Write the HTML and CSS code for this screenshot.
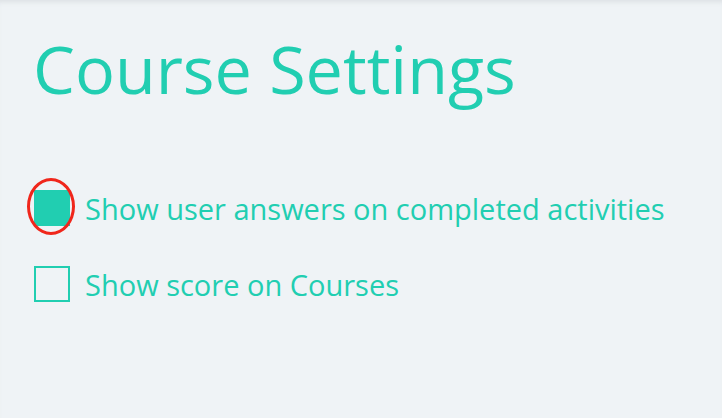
FILE: index.html
```html
<!DOCTYPE html>
<html>
<head>
    <title>Course Settings</title>
    <link rel="stylesheet" href="styles.css">
</head>
<body>
    <div class="page">
        <h1 class="page-title">Course Settings</h1>
        <ul class="settings-list">
            <li class="setting-row">
                <span class="checkbox checked highlighted"></span>
                <span class="setting-label">Show user answers on completed activities</span>
            </li>
            <li class="setting-row">
                <span class="checkbox"></span>
                <span class="setting-label">Show score on Courses</span>
            </li>
        </ul>
    </div>
</body>
</html>
```

FILE: styles.css
```css
html, body {
    margin: 0;
    height: 100%;
}
body {
    background-color: #EFF3F6;
    font-family: "Open Sans", sans-serif;
    color: #21CEB1;
    box-shadow: inset 0 5px 5px -3px #DCE0E3;
}
.page {
    padding: 18px 34px;
}
.page-title {
    margin: 0 0 0 -1px;
    font-size: 66.5px;
    font-weight: 400;
    line-height: 100px;
}
.settings-list {
    list-style-type: none;
    margin: 72px 0 0;
    padding: 0;
}
.setting-row {
    display: flex;
    align-items: center;
    gap: 15px;
    height: 36px;
    margin-bottom: 40px;
}
.checkbox {
    position: relative;
    box-sizing: border-box;
    width: 36px;
    height: 36px;
    border: 2px solid #21CEB1;
    flex-shrink: 0;
}
.checked {
    background-color: #21CEB1;
}
.highlighted::after {
    content: "";
    position: absolute;
    left: -9px;
    top: -14px;
    width: 42px;
    height: 51px;
    border: 3.5px solid #F0261B;
    border-radius: 50%;
}
.setting-label {
    font-size: 29px;
}
```
